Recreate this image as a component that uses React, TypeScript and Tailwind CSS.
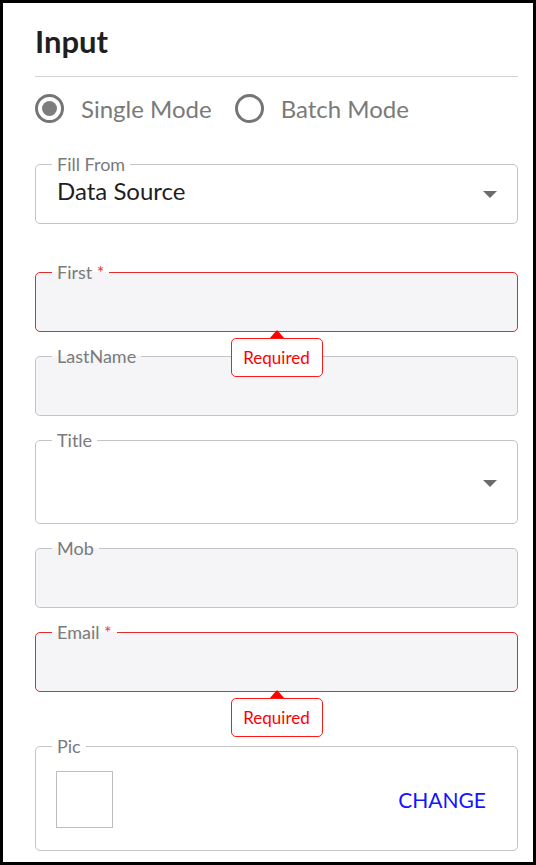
import React from 'react';

const font = { fontFamily: 'Lato, "Noto Sans", sans-serif' };

function Caret() {
  return (
    <svg width="14" height="7" viewBox="0 0 14 7" className="shrink-0">
      <path d="M0 0h14L7 7z" fill="#6b6b6b" />
    </svg>
  );
}

function Radio({ checked }: { checked?: boolean }) {
  return (
    <svg width="29" height="29" viewBox="0 0 29 29" className="shrink-0">
      <circle cx="14.5" cy="14.5" r="13" fill="none" stroke="#757575" strokeWidth="3" />
      {checked && <circle cx="14.5" cy="14.5" r="7.5" fill="#7d7d7d" />}
    </svg>
  );
}

function Required() {
  return (
    <div className="absolute left-1/2 top-full mt-[-2px] flex -translate-x-1/2 flex-col items-center">
      <svg width="16" height="9" viewBox="0 0 16 9" className="-mb-[1px] block">
        <path d="M0 9L8 0L16 9z" fill="#ff0000" />
      </svg>
      <div className="flex h-[39px] w-[92px] items-center justify-center rounded-[5px] border border-[#ff1a1a] bg-white text-[17px] text-[#ff0000]">
        Required
      </div>
    </div>
  );
}

interface FieldProps {
  label: string;
  required?: boolean;
  error?: boolean;
  gray?: boolean;
  children?: React.ReactNode;
  className?: string;
}

function Field({ label, required, error, gray, children, className = '' }: FieldProps) {
  const border = error ? 'border-[#e22c2c]' : 'border-[#c4c4c4]';
  const bg = gray ? 'bg-[#f5f5f7]' : 'bg-white';
  return (
    <fieldset className={`m-0 min-w-0 rounded-[5px] border p-0 ${border} ${bg} ${className}`}>
      <legend className="ml-[16px] px-[5px] text-[18px] leading-[18px] text-[#7a7a7a]">
        {label}
        {required && <span className="text-[#e53935]"> *</span>}
      </legend>
      {children}
    </fieldset>
  );
}

export default function App() {
  return (
    <div
      className="box-border h-[865px] w-[536px] border-[3px] border-black bg-white pl-[32px] pr-[15px]"
      style={font}
    >
      <h1 className="mt-[22px] text-[31px] font-bold leading-[32px] text-[#1f1f1f]">Input</h1>
      <div className="mt-[19px] h-px bg-[#d3d3d3]" />

      {/* mode switch */}
      <div className="mt-[17px] flex h-[29px] items-center text-[24px] text-[#7a7a7a]">
        <Radio checked />
        <span className="ml-[17px]">Single Mode</span>
        <span className="ml-[23px]">
          <Radio />
        </span>
        <span className="ml-[17px]">Batch Mode</span>
      </div>

      <div className="mt-[32px] flex flex-col">
        <Field label="Fill From">
          <div className="flex h-[50px] items-center justify-between pl-[21px] pr-[20px]">
            <span className="mb-[14px] text-[24px] leading-[28px] text-[#1f1f1f]">Data Source</span>
            <span className="mb-[7px]">
              <Caret />
            </span>
          </div>
        </Field>

        <div className="relative mt-[39px]">
          <Field label="First" required error gray>
            <div className="h-[50px]" />
          </Field>
          <Required />
        </div>

        <Field label="LastName" gray className="mt-[15px]">
          <div className="h-[50px]" />
        </Field>

        <Field label="Title" className="mt-[15px]">
          <div className="flex h-[74px] items-center justify-end pr-[20px]">
            <span className="mb-[5px]">
              <Caret />
            </span>
          </div>
        </Field>

        <Field label="Mob" gray className="mt-[15px]">
          <div className="h-[50px]" />
        </Field>

        <div className="relative mt-[15px]">
          <Field label="Email" required error gray>
            <div className="h-[50px]" />
          </Field>
          <Required />
        </div>

        <Field label="Pic" className="mt-[45px]">
          <div className="flex h-[95px] items-start justify-between pl-[20px] pr-[31px] pt-[16px]">
            <div className="flex w-full items-center justify-between">
              <div className="h-[57px] w-[57px] border border-[#bdbdbd]" />
              <span className="text-[21px] text-[#1414ff]">CHANGE</span>
            </div>
          </div>
        </Field>
      </div>
    </div>
  );
}
